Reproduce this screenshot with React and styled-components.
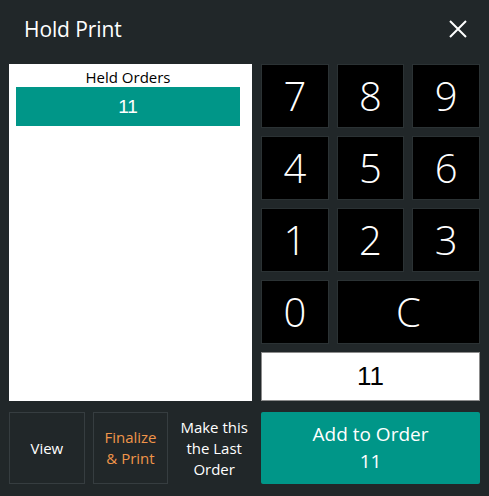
import React, { useState } from 'react';
import styled, { createGlobalStyle } from 'styled-components';

const GlobalStyle = createGlobalStyle`
  html, body {
    margin: 0;
    padding: 0;
    background: #212729;
  }
  * {
    box-sizing: border-box;
  }
`;

const Dialog = styled.div`
  width: 489px;
  height: 496px;
  background: #212729;
  color: #fff;
  font-family: 'Open Sans', 'Noto Sans', sans-serif;
  display: flex;
  flex-direction: column;
`;

const Header = styled.div`
  height: 64px;
  display: flex;
  align-items: center;
  justify-content: space-between;
  padding: 0 21px 6px 24px;
`;

const Title = styled.h1`
  margin: 0;
  font-size: 21px;
  font-weight: 400;
  letter-spacing: -0.1px;
`;

const CloseButton = styled.button`
  background: none;
  border: none;
  padding: 0;
  width: 20px;
  height: 20px;
  display: flex;
  align-items: center;
  justify-content: center;
  cursor: pointer;
`;

const Body = styled.div`
  display: grid;
  grid-template-columns: 243px 219px;
  grid-template-rows: 337px 72px;
  column-gap: 9px;
  row-gap: 11px;
  padding: 0 9px;
`;

const ListPanel = styled.div`
  background: #fff;
  color: #000;
  padding: 0 12px 0 7px;
`;

const ListHeader = styled.div`
  height: 23px;
  display: flex;
  align-items: center;
  justify-content: center;
  font-size: 15px;
  padding-top: 3px;
`;

const ListRow = styled.div`
  height: 39px;
  display: flex;
  align-items: center;
  justify-content: center;
  background: ${(p) => (p.$selected ? '#009688' : 'transparent')};
  color: ${(p) => (p.$selected ? '#fff' : '#000')};
  font-family: 'Liberation Sans', Arial, sans-serif;
  font-size: 19px;
`;

const RightColumn = styled.div`
  display: flex;
  flex-direction: column;
  gap: 8px;
`;

const Keypad = styled.div`
  display: grid;
  grid-template-columns: repeat(3, 1fr);
  grid-auto-rows: 64px;
  gap: 8px;
`;

const Key = styled.button`
  grid-column: span ${(p) => p.$span || 1};
  background: #000;
  border: 1px solid #2b3234;
  color: #fff;
  font-family: 'Open Sans', sans-serif;
  font-weight: 300;
  font-size: 40px;
  display: flex;
  align-items: center;
  justify-content: center;
  padding: 0 0 2px;
  cursor: pointer;
`;

const Entry = styled.div`
  height: 49px;
  background: #fff;
  border: 1px solid #8c8c8c;
  color: #000;
  font-family: 'Liberation Sans', Arial, sans-serif;
  font-size: 26px;
  display: flex;
  align-items: center;
  justify-content: center;
`;

const ActionRow = styled.div`
  display: grid;
  grid-template-columns: repeat(3, 1fr);
  gap: 8px;
`;

const ActionButton = styled.button`
  background: transparent;
  border: 1px solid ${(p) => (p.$plain ? 'transparent' : '#363d40')};
  color: ${(p) => (p.$accent ? '#f0954a' : '#fff')};
  font-family: 'Open Sans', sans-serif;
  font-size: 15px;
  line-height: 21px;
  padding: 0;
  display: flex;
  align-items: center;
  justify-content: center;
  text-align: center;
  cursor: pointer;
`;

const PrimaryButton = styled.button`
  background: #009688;
  border: none;
  border-radius: 2px;
  color: #fff;
  font-family: 'Open Sans', sans-serif;
  font-size: 19px;
  line-height: 27px;
  display: flex;
  flex-direction: column;
  align-items: center;
  justify-content: center;
  padding-bottom: 2px;
  cursor: pointer;
`;

const CloseIcon = () => (
  <svg width="18" height="18" viewBox="0 0 18 18">
    <path d="M1 1 L17 17 M17 1 L1 17" stroke="#fff" strokeWidth="2" />
  </svg>
);

const rows = [
  ['7', '8', '9'],
  ['4', '5', '6'],
  ['1', '2', '3'],
];

const App = () => {
  const [value] = useState('11');

  return (
    <>
      <GlobalStyle />
      <Dialog>
        <Header>
          <Title>Hold Print</Title>
          <CloseButton aria-label="Close">
            <CloseIcon />
          </CloseButton>
        </Header>
        <Body>
          <ListPanel>
            <ListHeader>Held Orders</ListHeader>
            <ListRow $selected>11</ListRow>
          </ListPanel>
          <RightColumn>
            <Keypad>
              {rows.flat().map((k) => (
                <Key key={k}>{k}</Key>
              ))}
              <Key>0</Key>
              <Key $span={2}>C</Key>
            </Keypad>
            <Entry>{value}</Entry>
          </RightColumn>
          <ActionRow>
            <ActionButton>View</ActionButton>
            <ActionButton $accent>
              Finalize
              <br />& Print
            </ActionButton>
            <ActionButton $plain>
              Make this
              <br />
              the Last
              <br />
              Order
            </ActionButton>
          </ActionRow>
          <PrimaryButton>
            <span>Add to Order</span>
            <span>{value}</span>
          </PrimaryButton>
        </Body>
      </Dialog>
    </>
  );
};

export default App;
